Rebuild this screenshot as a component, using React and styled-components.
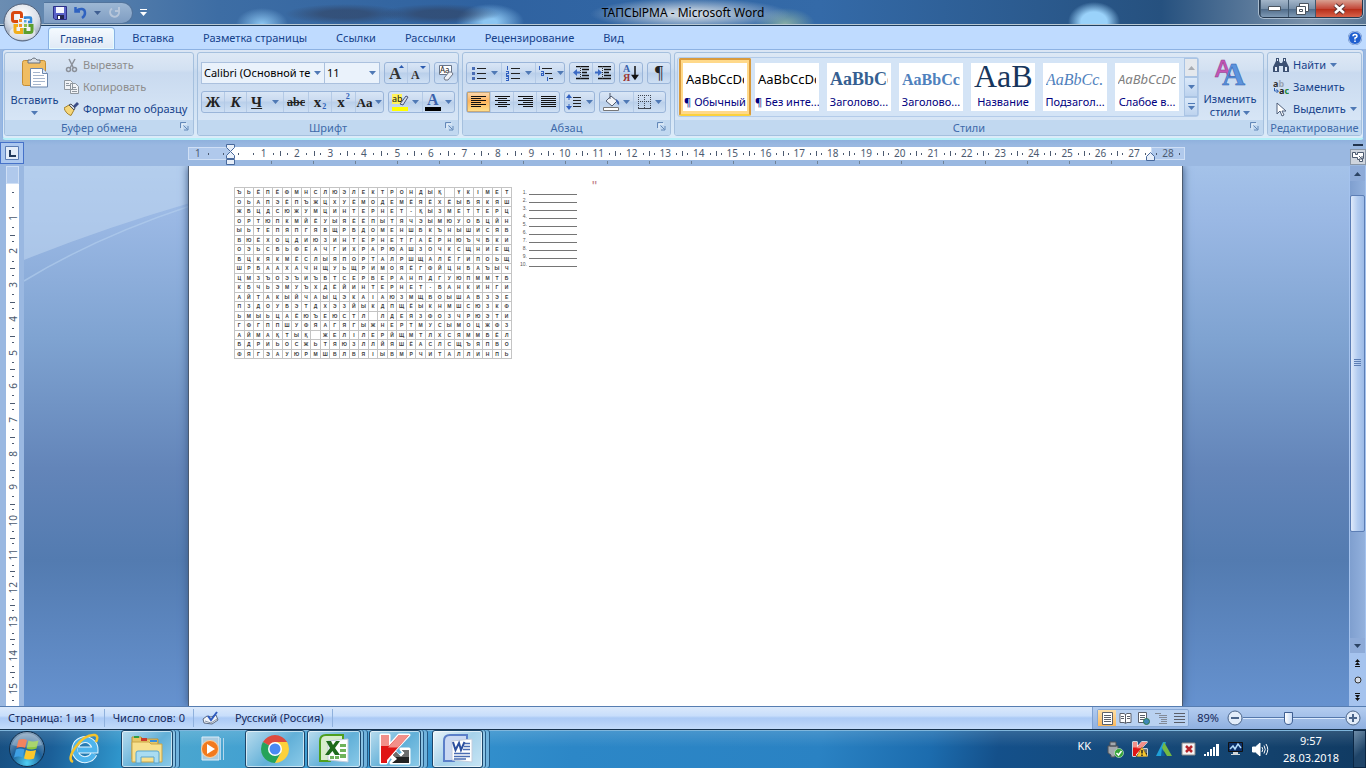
import React from 'react'
import styled, { createGlobalStyle, css } from 'styled-components'

const GlobalStyle = createGlobalStyle`
  * {
    box-sizing: border-box;
  }
  body {
    margin: 0;
    overflow: hidden;
  }
  button, select, input {
    font: inherit;
    color: inherit;
    margin: 0;
    padding: 0;
    border: 0;
    background: none;
  }
  svg {
    display: block;
    flex: none;
  }
`

const Desktop = styled.div`
  display: flex;
  flex-direction: column;
  height: 100vh;
  font-family: 'Noto Sans', 'Open Sans', sans-serif;
  font-size: 11px;
  line-height: 16px;
  color: #15428b;
  background: #9ab8e1;
`

/* title bar */

const TitleBar = styled.header`
  position: relative;
  display: flex;
  align-items: center;
  height: 26px;
  padding-left: 44px;
  border-bottom: 1px solid #1f3f60;
  box-shadow: inset 0 -1px 0 #b9c9d4;
  background:
    radial-gradient(ellipse 60px 10px at 345px 14px, rgba(50, 66, 96, 0.6) 40%, transparent),
    radial-gradient(ellipse 60px 10px at 440px 14px, rgba(50, 66, 96, 0.6) 40%, transparent),
    radial-gradient(ellipse 26px 16px at 262px 24px, #8cc6f2, transparent),
    radial-gradient(ellipse 34px 18px at 490px 22px, #8cc6f2 20%, transparent),
    radial-gradient(ellipse 100px 16px at 690px 14px, #c3d0de 20%, transparent),
    radial-gradient(ellipse 30px 16px at 785px 24px, #86ada6, transparent),
    radial-gradient(ellipse 26px 20px at 1094px 22px, #9ad2fa 50%, transparent),
    linear-gradient(90deg, #6b8db2 0, #3d6da4 16%, #2f62a0 35%, #346aa8 60%, #26517f 85%, #7c93ac 96%, #5b7795 100%);
`

const QuickAccess = styled.div`
  display: flex;
  align-items: center;
  gap: 7px;
  width: 89px;
  height: 22px;
  padding-left: 9px;
  border: 1px solid #52749c;
  border-left: 0;
  border-radius: 0 12px 12px 0;
  background: linear-gradient(#9db7d4, #7f9dc2);
`

const PlainButton = styled.button`
  display: flex;
  align-items: center;
  justify-content: center;
`

const MoreButton = styled(PlainButton)`
  margin-left: 7px;
`

const Title = styled.h1`
  position: absolute;
  left: 0;
  right: 0;
  margin: 0;
  text-align: center;
  font-size: 12px;
  font-weight: 400;
  color: #000;
  pointer-events: none;
`

const WindowButtons = styled.div`
  display: flex;
  align-self: flex-start;
  margin-left: auto;
  margin-right: 3px;
  height: 18px;
  border: 1px solid #25384e;
  border-top: 0;
  border-radius: 0 0 5px 5px;
  overflow: hidden;
  box-shadow: 0 0 0 1px #a9bccf;
`

const WindowButton = styled(PlainButton)`
  width: ${props => props.$width}px;
  border-left: 1px solid #41586f;
  background: ${props => (props.$close
    ? 'linear-gradient(#d9a091, #c4493a 50%, #b52b17 52%, #d8624a)'
    : 'linear-gradient(#a3b6c9, #7890a9 50%, #4e6a88 52%, #7f9ab5)')};
`

const OfficeButton = styled.button`
  position: absolute;
  top: 3px;
  left: 3px;
  z-index: 2;
`

/* ribbon */

const Tabs = styled.nav`
  display: flex;
  align-items: flex-end;
  gap: 5px;
  height: 23px;
  padding-left: 48px;
  background: #bfdbff;
`

const Tab = styled.button`
  height: 22px;
  padding: 0 12px;
  ${props => props.$active && css`
    border: 1px solid #8ab2e4;
    border-bottom: 0;
    border-radius: 4px 4px 0 0;
    box-shadow: inset 0 0 0 1px #e5fbff;
    background: linear-gradient(#f5faff, #dfe9f5);
    padding: 0 11px;
  `}
`

const HelpButton = styled(PlainButton)`
  margin-left: auto;
  margin-right: 4px;
  align-self: center;
`

const Ribbon = styled.section`
  display: flex;
  gap: 3px;
  height: 91px;
  margin: 0 2px;
  padding: 2px 1px;
  border: 1px solid #8db2e3;
  border-bottom: 2px solid #b4f0f8;
  border-radius: 4px;
  background: linear-gradient(#dbe6f4, #cfdff1 20%, #c5d8ee 24%, #dcebf9);
`

const Group = styled.div`
  display: flex;
  flex-direction: column;
  flex: ${props => (props.$width ? `0 0 ${props.$width}px` : '1')};
  min-width: 0;
  border: 1px solid #a5c0de;
  border-radius: 3px;
  background: linear-gradient(#dde8f5, #d3e1f2 20%, #c9daef 24%, #dbe9f8);
`

const GroupBody = styled.div`
  flex: 1;
  display: flex;
  min-height: 0;
  padding: ${props => props.$pad || '0 3px'};
`

const GroupLabel = styled.div`
  position: relative;
  height: 15px;
  line-height: 15px;
  text-align: center;
  color: #3e6aaa;
  background: #c1d8f0;
  border-radius: 0 0 2px 2px;
  white-space: nowrap;
`

const Launcher = styled.button`
  position: absolute;
  right: 4px;
  top: 2px;
`

const BigButton = styled.button`
  display: flex;
  flex-direction: column;
  align-items: center;
  justify-content: flex-start;
  width: ${props => props.$width}px;
  padding-top: 4px;
  line-height: 13px;
  gap: 5px;
`

const Stack = styled.div`
  display: flex;
  flex-direction: column;
  padding-top: 1px;
`

const SmallButton = styled.button`
  display: flex;
  align-items: center;
  gap: 4px;
  height: 22px;
  white-space: nowrap;
  color: ${props => (props.disabled ? '#8d8d8d' : '#15428b')};
`

const Rows = styled.div`
  display: flex;
  flex-direction: column;
  gap: 7px;
  padding-top: 9px;
`

const Row = styled.div`
  display: flex;
  gap: 4px;
`

const ButtonSet = styled.div`
  display: flex;
  height: 22px;
  border: 1px solid #9ab5d9;
  border-radius: 3px;
  background: linear-gradient(#d9e6f6, #c8d9ef 45%, #b9cfea 50%, #cfe0f4);
`

const Tool = styled.button`
  display: flex;
  align-items: center;
  justify-content: center;
  gap: 3px;
  width: ${props => props.$width || 22}px;
  color: #222;
  font-family: 'Liberation Serif', serif;
  font-size: ${props => props.$size || 15}px;
  line-height: 15px;
  & + & {
    border-left: 1px solid #b4cae6;
  }
  ${props => props.$active && css`
    background: linear-gradient(#fbdbb5, #feb35c 45%, #ffe28c);
    box-shadow: inset 0 0 0 1px #c8a878;
  `}
`

const ScriptMark = styled.b`
  align-self: ${props => (props.$low ? 'flex-end' : 'flex-start')};
  margin-left: -2px;
  font-size: 8px;
  line-height: 10px;
  color: #2f62b8;
`

const Combo = styled.label`
  position: relative;
  display: flex;
  align-items: center;
  width: ${props => props.$width}px;
  height: 22px;
  border: 1px solid #abc1de;
  background: #eaf2fb;
  & + & {
    border-left: 0;
  }
  svg {
    position: absolute;
    right: 3px;
  }
`

const Select = styled.select`
  appearance: none;
  width: calc(100% - 13px);
  height: 20px;
  padding-left: 2px;
  overflow: hidden;
  white-space: nowrap;
  text-overflow: clip;
  color: #000;
`

const Combos = styled.div`
  display: flex;
`

const Gallery = styled.div`
  flex: 1;
  display: flex;
  height: 60px;
  margin-top: 4px;
  border: 1px solid #b3cbe9;
  border-radius: 3px;
  background: #d4e4f6;
`

const StyleList = styled.div`
  flex: 1;
  display: flex;
  min-width: 0;
  overflow: hidden;
  padding-left: 1px;
`

const StyleItem = styled.button`
  flex: none;
  width: 72px;
  height: 58px;
  padding: 5px 4px;
  ${props => props.$active && css`
    padding: 3px 2px;
    border: 2px solid #d99a3c;
    border-bottom-color: #fcd13c;
    border-radius: 2px;
    background: #ffd98a;
  `}
`

const StyleCard = styled.span`
  display: flex;
  flex-direction: column;
  height: 48px;
  overflow: hidden;
  background: #fff;
  white-space: nowrap;
  color: #000080;
  text-align: center;
`

const Sample = styled.span`
  display: block;
  height: 31px;
  margin: 0 3px;
  overflow: hidden;
  text-align: left;
  line-height: ${props => props.$lh || 33}px;
  font-family: ${props => props.$font || "'Noto Sans', sans-serif"};
  font-size: ${props => props.$size || 13}px;
  font-weight: ${props => (props.$bold ? 700 : 400)};
  font-style: ${props => (props.$italic ? 'italic' : 'normal')};
  color: ${props => props.$color || '#000'};
`

const GalleryScroll = styled.div`
  display: flex;
  flex-direction: column;
  width: 14px;
`

const GalleryArrow = styled(PlainButton)`
  flex: 1;
  border: 1px solid #aac4e4;
  background: ${props => (props.disabled ? '#e4e8ed' : 'linear-gradient(#dbe9f9, #bdd3ee)')};
`

const InlineArrow = styled.span`
  display: inline-block;
  vertical-align: middle;
`

/* rulers */

const RulerBar = styled.div`
  display: flex;
  height: 26px;
  background: linear-gradient(#8fb1dd, #9ab8e1 20%);
`

const TabSelector = styled.button`
  display: flex;
  align-items: center;
  justify-content: center;
  width: 24px;
  height: 22px;
  margin-top: 2px;
  border: 1px solid #4672c9;
  background: #abc7ef;
`

const RulerTrack = styled.div`
  flex: 1;
  display: flex;
  justify-content: center;
  padding-top: 7px;
`

const HRuler = styled.div`
  width: calc(100% - 328px);
  color: #4c5a70;
  font-size: 10px;
  line-height: 13px;
`

const HZones = styled.div`
  display: flex;
  height: 13px;
`

const Zone = styled.div`
  position: relative;
  display: flex;
  flex: ${props => props.$span} 1 0;
  min-width: 0;
  background: ${props => (props.$margin ? '#b0c9ec' : '#fff')};
  box-shadow: ${props => (props.$margin ? 'inset 0 0 0 1px #cfdff5' : 'none')};
`

const Centimetre = styled.span`
  position: relative;
  flex: ${props => (props.$half ? 1 : 2)} 1 0;
  min-width: 0;
  display: flex;
  align-items: center;
  justify-content: space-evenly;
  & + &::before {
    content: '';
    position: absolute;
    left: 0;
    top: 4px;
    width: 1px;
    height: 5px;
    background: #4c5a70;
  }
`

const Dot = styled.i`
  width: 1px;
  height: 2px;
  background: #4c5a70;
`

const Marker = styled.svg`
  position: absolute;
  z-index: 1;
  ${props => props.$end && css`
    top: 5px;
    right: -5px;
  `}
  ${props => !props.$end && css`
    top: -3px;
    left: -4px;
  `}
`

const TabStops = styled.div`
  height: 3px;
  margin-top: 1px;
  background: repeating-linear-gradient(90deg, transparent 0 41px, #6f8297 41px 42px);
  margin-left: 42px;
  margin-right: 34px;
`

const ScrollHead = styled.div`
  display: flex;
  flex-direction: column;
  align-items: center;
  gap: 3px;
  width: 17px;
  padding-top: 4px;
`

const Splitter = styled.div`
  width: 10px;
  height: 2px;
  background: #22344d;
`

const RulerToggle = styled(PlainButton)`
  width: 16px;
  height: 16px;
  border: 1px solid #8a97a8;
  background: #cfd5de;
`

const Workspace = styled.main`
  flex: 1;
  display: flex;
  min-height: 0;
`

const VRulerColumn = styled.div`
  width: 24px;
  padding: 0 5px 0 6px;
  background: #9ab8e1;
`

const VRuler = styled.div`
  display: flex;
  flex-direction: column;
  height: 100%;
  color: #4c5a70;
  font-size: 10px;
  line-height: 12px;
  background: #fff;
`

const VMargin = styled.div`
  height: 18px;
  flex: none;
  background: #b0c9ec;
  border: 1px solid #cfdff5;
`

const VCentimetre = styled.div`
  position: relative;
  flex: ${props => (props.$half ? 1 : 2)} 1 0;
  min-height: 0;
  display: flex;
  flex-direction: column;
  align-items: center;
  justify-content: space-evenly;
  & + &::before {
    content: '';
    position: absolute;
    left: 4px;
    top: 0;
    width: 5px;
    height: 1px;
    background: #4c5a70;
  }
  i {
    width: 2px;
    height: 1px;
  }
`

const VNumber = styled.span`
  writing-mode: vertical-rl;
  transform: rotate(180deg);
`

/* document */

const Canvas = styled.div`
  position: relative;
  flex: 1;
  display: flex;
  justify-content: center;
  overflow: hidden;
  background: linear-gradient(#a4c2e9, #9ab8e4 10%, #7fa3d1 32%, #6385b9 56%, #537bb0 73%, #6692cf);
`

const Swoosh = styled.svg`
  position: absolute;
  left: 0;
  top: 0;
`

const Page = styled.article`
  position: relative;
  display: flex;
  align-items: flex-start;
  width: calc(100% - 330px);
  margin-right: 2px;
  padding: 13px 45px;
  background: #fff;
  border-left: 1px solid #4c5b70;
  border-right: 1px solid #4c5b70;
  box-shadow: 0 0 8px #3d5a85;
`

const LetterTable = styled.table`
  width: 278px;
  height: 172px;
  margin-top: 8px;
  table-layout: fixed;
  border-collapse: collapse;
  font-family: 'Liberation Sans', Arial, sans-serif;
  font-size: 5px;
  font-weight: 700;
  line-height: 6px;
  color: #3c3c3c;
`

const Letter = styled.td`
  padding: 0;
  border: 1px solid #c4c4c4;
  text-align: center;
  vertical-align: middle;
`

const Answers = styled.ol`
  margin: 9px 0 0 8px;
  padding: 0;
  list-style: none;
  font-family: 'Liberation Sans', Arial, sans-serif;
  font-size: 5px;
  line-height: 8px;
  color: #555;
`

const Answer = styled.li`
  display: flex;
  align-items: flex-start;
  gap: 2px;
  height: 8px;
`

const AnswerNumber = styled.span`
  width: 7px;
  text-align: right;
`

const AnswerLine = styled.span`
  width: 48px;
  height: 7px;
  border-bottom: 1px solid #757575;
`

const Mark = styled.span`
  margin-left: 15px;
  font-family: 'Liberation Sans', Arial, sans-serif;
  font-size: 14px;
  line-height: 14px;
  color: #c08088;
`

const Scrollbar = styled.aside`
  display: flex;
  flex-direction: column;
  align-items: center;
  width: 17px;
  color: #2c4464;
  background: #a5c3ee;
`

const ScrollButton = styled(PlainButton)`
  width: 15px;
  height: 15px;
  background: ${props => (props.$raised ? '#8eabd8' : 'transparent')};
`

const PageButtons = styled.div`
  display: flex;
  flex-direction: column;
  gap: 2px;
  padding-bottom: 2px;
`

const Track = styled.div`
  flex: 1;
  width: 15px;
  padding-top: 14px;
  background: linear-gradient(90deg, #7f9fcf, #93b1dd);
`

const Thumb = styled.div`
  display: flex;
  align-items: center;
  justify-content: center;
  width: 15px;
  height: 76%;
  border: 1px solid #5c7eb5;
  border-radius: 2px;
  background: linear-gradient(90deg, #dfeafa, #b4cdf0 50%, #9dbbe7);
`

/* status bar */

const StatusBar = styled.footer`
  display: flex;
  align-items: center;
  height: 23px;
  border-top: 1px solid #567db1;
  color: #15285a;
  background: linear-gradient(#dbe9fb, #c8defb 40%, #abcaf5 50%, #c3dbfa);
`

const StatusItem = styled.button`
  height: 18px;
  padding: 0 8px;
  line-height: 18px;
  border-right: ${props => (props.$open ? 0 : '1px solid #8fb1dd')};
  white-space: nowrap;
`

const StatusTools = styled.div`
  display: flex;
  align-items: center;
  align-self: stretch;
  margin-left: auto;
  padding: 0 5px 0 4px;
  border-left: 1px solid #7fa0cf;
  background: linear-gradient(#b4cdf0, #8fb0e0);
`

const Views = styled.div`
  display: flex;
  height: 18px;
  border: 1px solid #87a8d5;
  border-radius: 2px;
  background: #b9d1f1;
`

const ViewButton = styled(PlainButton)`
  width: 18px;
  background: ${props => (props.$active ? 'linear-gradient(#fcdfa8, #fdb95d)' : 'transparent')};
`

const ZoomValue = styled.button`
  width: 38px;
  text-align: center;
`

const ZoomRange = styled.input`
  appearance: none;
  width: 102px;
  height: 16px;
  background: linear-gradient(transparent 7px, #5578ab 7px 8px, #dceafd 8px 9px, transparent 9px);
  &::-webkit-slider-thumb {
    appearance: none;
    width: 9px;
    height: 13px;
    border: 1px solid #3f5f92;
    border-radius: 1px 1px 5px 5px;
    background: linear-gradient(90deg, #fff, #c5d9f5);
  }
`

/* taskbar */

const Taskbar = styled.nav`
  display: flex;
  align-items: stretch;
  height: 39px;
  padding-left: 8px;
  border-top: 1px solid #17324d;
  box-shadow: inset 0 1px 0 #7fb6dc;
  background:
    linear-gradient(rgba(255, 255, 255, 0.14), transparent 45%),
    linear-gradient(100deg, #174f81 0, #1b5f98 4%, #2f95cb 9%, #4aa6cf 13%, #3b9bd3 25%, #2c87c7 42%, #2a82c3 60%, #1c6cae 68%, #14508a 73%, #154673 88%, #103a62 100%);
`

const TaskIcon = styled(PlainButton)`
  width: ${props => props.$width}px;
`

const TaskButton = styled(PlainButton)`
  width: ${props => props.$width}px;
  margin-right: ${props => props.$after}px;
  border: 1px solid #1c4569;
  border-radius: 3px;
  box-shadow: inset 0 0 0 1px rgba(255, 255, 255, 0.6)${props => (props.$stacked
    ? ', 2px 0 0 0 #8bc3e4, 3px 0 0 0 #235a87, 6px 0 0 0 #6fb2dc, 7px 0 0 0 #235a87'
    : '')};
  background: ${props => (props.$active
    ? 'linear-gradient(135deg, #eaf5fb, #a7d2ea 50%, #c7e5f5)'
    : 'linear-gradient(135deg, #b9dcee, #62b0d8 55%, #8ccbe9)')};
`

const Tray = styled.div`
  display: flex;
  align-items: center;
  margin-left: auto;
  color: #fff;
`

const TrayIcons = styled.div`
  display: flex;
  align-items: center;
  gap: 8px;
`

const Language = styled.button`
  margin-right: 16px;
  padding-bottom: 6px;
`

const Clock = styled.time`
  width: 84px;
  text-align: center;
  line-height: 17px;
`

const ShowDesktop = styled.button`
  align-self: stretch;
  width: 13px;
  border: 1px solid #0b2745;
  background: linear-gradient(135deg, #6f8da9, #1f4468 60%);
`

const Arrow = ({ color = '#4f79b5', up = false }) => (
  <svg width="7" height="4" viewBox="0 0 7 4" fill={color}>
    <path d={up ? 'M0 4h7L3.500 0z' : 'M0 0h7L3.500 4z'} />
  </svg>
)

const LauncherIcon = () => (
  <svg width="9" height="9" viewBox="0 0 9 9" fill="none" stroke="#6388b8">
    <path d="M.5 6V.5H6M3.500 3.500l4 4M8 4v4H4" />
    <path d="M2 7.500V2h5" stroke="#fff" opacity=".7" />
  </svg>
)

// horizontal bars with a given length for each row
const Lines = ({ rows, x = 0, end = false, center = false, step = 2, width = 15, color = '#111' }) => {
  const start = length => {
    if (end) return width - length
    return center ? (width - length) / 2 : x
  }
  return (
    <svg width={width} height={rows.length * step} shapeRendering="crispEdges">
      {rows.map((length, i) => (
        <rect key={i} x={start(length)} y={i * step} width={length} height="1" fill={color} />
      ))}
    </svg>
  )
}

const OfficeLogo = () => (
  <svg width="39" height="39" viewBox="0 0 39 39">
    <defs>
      <radialGradient id="orb" cx="50%" cy="30%" r="70%">
        <stop offset="0" stopColor="#fff" />
        <stop offset=".6" stopColor="#d9dfe8" />
        <stop offset="1" stopColor="#8f9db2" />
      </radialGradient>
    </defs>
    <circle cx="19.500" cy="19.500" r="18.500" fill="url(#orb)" stroke="#53627a" />
    <ellipse cx="19.500" cy="30" rx="13" ry="7" fill="#fff" opacity=".6" />
    <g fill="none">
      <path d="M15 18.500h-3.500q-2 0-2-2v-5q0-2 2-2h5q2 0 2 2V15" stroke="#d9480f" strokeWidth="3" />
      <path d="M22 16v-1.500h5q1 0 1 1V19h-3" stroke="#2f86d6" strokeWidth="2.500" />
      <path d="M15 22.500h-3v5q0 2 2 2h4.500V25" stroke="#f2ae1a" strokeWidth="3" />
      <path d="M22 25v4.500h5q2 0 2-2v-5h-3.500" stroke="#5c9f2c" strokeWidth="3" />
    </g>
    <path d="M16 16h3v3h-3zM16 21h3v3h-3z" fill="#f2912a" />
    <path d="M21 17h2.500v2.500H21z" fill="#5aa5e4" />
    <path d="M21 21h3v3h-3z" fill="#8cc04c" />
  </svg>
)

const SaveIcon = () => (
  <svg width="14" height="14" viewBox="0 0 14 14">
    <path d="M.5.500h13v13H2L.5 12z" fill="#5a62c8" stroke="#2b2f86" />
    <path d="M3 1h8v6H3z" fill="#f4f6ff" />
    <path d="M4 9h7v4H4z" fill="#23264f" />
    <path d="M5 10h2v3H5z" fill="#fff" />
  </svg>
)

const UndoIcon = () => (
  <svg width="13" height="13" viewBox="0 0 13 13" fill="none" stroke="#2f62c0" strokeWidth="2.500">
    <path d="M2 5c4-3 9-3 9 2q0 3-3 5M1.500 1v4.500H6" />
  </svg>
)

const RepeatIcon = () => (
  <svg width="13" height="13" viewBox="0 0 13 13" fill="none" stroke="#b7c6da" strokeWidth="2">
    <path d="M4 2.500A4.500 4.500 0 1 0 10.500 4M7 5h4V1" />
  </svg>
)

const MoreIcon = ({ color = '#fff' }) => (
  <svg width="7" height="7" viewBox="0 0 7 7" fill={color}>
    <path d="M0 0h7v1H0zM0 3h7L3.500 7z" />
  </svg>
)

const PasteIcon = () => (
  <svg width="28" height="31" viewBox="0 0 28 31">
    <rect x="1.500" y="3.500" width="23" height="25" rx="2" fill="#f0bd62" stroke="#c48d33" />
    <path d="M7 6V3h3q3-4 6 0h3v3z" fill="#d8dce2" stroke="#66707c" />
    <path d="M9.500 11.500h12l5 5V30h-17z" fill="#fff" stroke="#6c87ad" />
    <path d="M21.500 11.500v5h5" fill="#dce7f5" stroke="#6c87ad" />
    <path d="M12 15.500h7M12 18.500h11M12 21.500h12M12 24.500h12M12 27.500h8" stroke="#a5b5cc" />
  </svg>
)

const CutIcon = () => (
  <svg width="15" height="15" viewBox="0 0 15 15" fill="none" stroke="#8b9099" strokeWidth="1.500">
    <path d="M5 1l4.500 9M11 1L6 10" />
    <circle cx="4.500" cy="11.500" r="2" />
    <circle cx="10.500" cy="11.500" r="2" />
  </svg>
)

const CopyIcon = () => (
  <svg width="15" height="14" viewBox="0 0 15 14" fill="#f1f3f6" stroke="#8f979f">
    <path d="M.5.500h6l2 2v7h-8zM6.500 3.500h5l3 3v7h-8z" />
    <path d="M2 3.500h3M2 5.500h4M8 7.500h4M8 9.500h5M8 11.500h5" />
  </svg>
)

const BrushIcon = () => (
  <svg width="15" height="14" viewBox="0 0 15 14">
    <path d="M0 6l5-3 5 5-3 5.500Q2 12 0 6z" fill="#f5d67a" stroke="#a5822c" />
    <path d="M5 3l2-1 4 4-1 2z" fill="#d6d9df" stroke="#4b4f59" />
    <path d="M9 4l4-4 2 2-4 4z" fill="#3b4d86" />
  </svg>
)

const GrowFontIcon = ({ shrink }) => (
  <svg width="17" height="18" viewBox="0 0 17 18">
    <text x="1" y="15" fontFamily="Liberation Serif, serif" fontWeight="700" fontSize={shrink ? 12 : 17} fill="#333">A</text>
    <path d={shrink ? 'M10 2h6l-3 3z' : 'M11 4h5l-2.500-3z'} fill="#2b5bb0" />
  </svg>
)

const ClearIcon = () => (
  <svg width="17" height="18" viewBox="0 0 17 18">
    <path d="M1.500 1.500h12v9h-12z" fill="#fff" stroke="#68758a" />
    <text x="2" y="9" fontFamily="Noto Sans, sans-serif" fontSize="8" fill="#222">Aa</text>
    <path d="M6 14l5-6q3-1 4 2l-5 6q-4 1-4-2z" fill="#eef1f7" stroke="#6c7484" />
  </svg>
)

const HighlightIcon = () => (
  <svg width="17" height="18" viewBox="0 0 17 18">
    <path d="M0 1h10v10H0z" fill="#fff35c" />
    <text x="0" y="9" fontFamily="Noto Sans, sans-serif" fontSize="9" fill="#111">ab</text>
    <path d="M8 11l6-8 2 1-5 8z" fill="#d6dcea" stroke="#49557a" />
    <path d="M0 14h16v4H0z" fill="#ff0" />
  </svg>
)

const FontColorIcon = () => (
  <svg width="17" height="18" viewBox="0 0 17 18">
    <text x="2" y="12" fontFamily="Liberation Serif, serif" fontWeight="700" fontSize="16" fill="#3a62ab">A</text>
    <path d="M0 14h16v4H0z" fill="#000" />
  </svg>
)

const ListIcon = ({ kind }) => (
  <svg width="17" height="16" viewBox="0 0 17 16" shapeRendering="crispEdges">
    {kind === 'multi'
      ? <path d="M5 3.500h10M8 8.500h7M12 13.500h4" stroke="#222" />
      : <path d="M6 3.500h9M6 8.500h9M6 13.500h9" stroke="#222" />}
    {kind === 'bullets' && <path d="M1 2h3v3H1zM1 7h3v3H1zM1 12h3v3H1z" fill="#4a6db5" />}
    {kind === 'numbers' && <path d="M2.500 1v4M1 6.500h2.500v2H1.500v2h2M1 11.500h2.500v4H1M1 13.500h2" fill="none" stroke="#3160c0" />}
    {kind === 'multi' && <path d="M2.500 1v4M4 6.500h2.500v4h-2v-2h2M10.500 12v4" fill="none" stroke="#3160c0" />}
  </svg>
)

const IndentIcon = ({ right }) => (
  <svg width="17" height="14" viewBox="0 0 17 14">
    <path d="M3 .5h13M9 3.500h7M9 6.500h5M9 9.500h7M3 12.500h13" stroke="#111" strokeWidth="1.500" />
    <path d={right ? 'M0 5.500h3V3l4 3.500L3 10V7.500H0z' : 'M7 5.500H4V3L0 6.500 4 10V7.500h3z'} fill="#3b6ac4" />
    <path d="M7.500 0v14" stroke="#333" strokeDasharray="1 1" />
  </svg>
)

const SortIcon = () => (
  <svg width="16" height="18" viewBox="0 0 16 18">
    <text x="0" y="8" fontFamily="Liberation Serif, serif" fontWeight="700" fontSize="10" fill="#3a62ab">А</text>
    <text x="0" y="17" fontFamily="Liberation Serif, serif" fontWeight="700" fontSize="10" fill="#9d3530">Я</text>
    <path d="M12 2v12M9.500 11.500L12 15l2.500-3.500z" stroke="#111" strokeWidth="1.500" />
  </svg>
)

const SpacingIcon = () => (
  <svg width="17" height="16" viewBox="0 0 17 16">
    <path d="M7 3.500h8M7 6.500h8M7 9.500h8M7 12.500h8" stroke="#222" />
    <path d="M3 0l3 4H0zM3 16l3-4H0zM2.500 4h1v2h-1zM2.500 10h1v2h-1z" fill="#3160c0" />
  </svg>
)

const FillIcon = () => (
  <svg width="17" height="18" viewBox="0 0 17 18">
    <path d="M3 8l5-5 6 5-5 5z" fill="#f4f6fa" stroke="#525c70" />
    <path d="M7 0v6" stroke="#525c70" />
    <path d="M13 6q4 2 3 6-2-1-3-4z" fill="#3f66b4" />
    <path d="M.5 14.500h15v3H.5z" fill="#fff" stroke="#777" />
  </svg>
)

const BorderIcon = () => (
  <svg width="14" height="14" viewBox="0 0 14 14" fill="none" stroke="#3f4652">
    <path d="M.5 0v13M6.500 0v13M12.500 0v13M0 .5h13M0 6.500h13" strokeDasharray="1 1" />
    <path d="M0 13.500h13" />
  </svg>
)

const StylesIcon = () => (
  <svg width="32" height="30" viewBox="0 0 32 30">
    <text x="1" y="20" fontFamily="Open Sans, sans-serif" fontWeight="600" fontSize="24" fill="#c455b5" stroke="#8c3c88" strokeWidth=".5">A</text>
    <text x="8" y="28" fontFamily="Liberation Serif, serif" fontWeight="700" fontSize="32" fill="#5c93dd" stroke="#2d60ad" strokeWidth=".5">A</text>
  </svg>
)

const FindIcon = () => (
  <svg width="16" height="14" viewBox="0 0 16 14" fill="#3d5173">
    <path d="M3 0h3v3l1 2h2l1-2V0h3v3l3 6v5h-6V8H6v6H0V9l3-6z" />
    <path d="M2 9h2v4H2zM12 9h2v4h-2zM4 1h1v2H4zM11 1h1v2h-1z" fill="#e6edf8" />
  </svg>
)

const ReplaceIcon = () => (
  <svg width="16" height="16" viewBox="0 0 16 16" fontFamily="Noto Sans, sans-serif" fontWeight="700" fontSize="9">
    <text x="0" y="8" fill="#333">a<tspan fill="#9aa3b0">b</tspan></text>
    <text x="6" y="15" fill="#222">a<tspan fill="#238a3c">c</tspan></text>
    <path d="M1.500 9v3H5M3.500 10.500L5.500 12l-2 2" fill="none" stroke="#2a5db0" />
  </svg>
)

const CursorIcon = () => (
  <svg width="16" height="15" viewBox="0 0 16 15">
    <path d="M4 1v11l3-3 2 5 2-1-2-4h4z" fill="#fff" stroke="#51617c" />
  </svg>
)

const HelpIcon = () => (
  <svg width="14" height="14" viewBox="0 0 14 14">
    <circle cx="7" cy="7" r="6.500" fill="#1f5fd0" stroke="#e8f2ff" />
    <circle cx="7" cy="7" r="6.900" fill="none" stroke="#2d5cae" strokeWidth=".5" />
    <path d="M5 5.200Q5 3.500 7 3.500t2 1.700Q9 6.300 7 7v1.500M7 9.500V11" fill="none" stroke="#fff" strokeWidth="1.500" />
  </svg>
)

const ProofIcon = () => (
  <svg width="17" height="15" viewBox="0 0 17 15">
    <path d="M1 8l4-3 4 1 5-2 2 5-6 4-8-1z" fill="#f2f5fa" stroke="#5c6a80" />
    <path d="M3 10l6 2 6-4" fill="none" stroke="#8794a8" />
    <path d="M6 5l3 4 6-8" fill="none" stroke="#2f5cc0" strokeWidth="2" />
  </svg>
)

const PageViewIcon = ({ kind }) => (
  <svg width="13" height="13" viewBox="0 0 13 13" fill="none" stroke="#5a5f6a">
    {kind === 'print' && <path d="M1.500.500h10v12h-10zM3 3.500h7M3 5.500h7M3 7.500h7M3 9.500h7" fill="#fff" />}
    {kind === 'read' && <path d="M1 1.500h4l1.500 1L8 1.500h4v9H8l-1.500 1-1.500-1H1zM6.500 2v9M2 4.500h3M2 6.500h3M8 4.500h3M8 6.500h3" fill="#fff" />}
    {kind === 'web' && (
      <>
        <path d="M1.500.500h8v10h-8zM3 3.500h5M3 5.500h5M3 7.500h5" fill="#fff" />
        <circle cx="9.500" cy="9.500" r="3" fill="#3f86b8" stroke="#2f7a4b" />
      </>
    )}
    {kind === 'outline' && <path d="M0 1.500h6M4 3.500h8M4 5.500h8M6 7.500h6M6 9.500h6M4 11.500h8" stroke="#828a98" />}
    {kind === 'draft' && <path d="M1 1.500h11M1 4.500h11M1 7.500h11M1 10.500h11" />}
  </svg>
)

const RoundIcon = ({ plus }) => (
  <svg width="16" height="16" viewBox="0 0 16 16" stroke="#4a6489">
    <circle cx="8" cy="8" r="7" fill="#e2ecf9" />
    <path d={plus ? 'M4 8h8M8 4v8' : 'M4 8h8'} strokeWidth="2" />
  </svg>
)

const StartOrb = () => (
  <svg width="38" height="38" viewBox="0 0 38 38">
    <defs>
      <radialGradient id="start" cx="50%" cy="90%" r="90%">
        <stop offset="0" stopColor="#4fd0f5" />
        <stop offset=".5" stopColor="#1d5f98" />
        <stop offset="1" stopColor="#8ea6bd" />
      </radialGradient>
    </defs>
    <circle cx="19" cy="19" r="17.500" fill="url(#start)" stroke="#0f2c49" />
    <path d="M10.500 10q4.500-2 8.500 0l-2 8q-4-2-8.500 0z" fill="#ee5b2a" />
    <path d="M20.500 10.500q4 2 10 0l-2 8q-5 2-10 0z" fill="#8cc63f" />
    <path d="M8 19.500q4.500-2 8.500 0l-2 8q-4-2-8.500 0z" fill="#3fa0e4" />
    <path d="M18 20q4 2 10 0l-2 8.500q-5 2-10 0z" fill="#fcc72c" />
    <path d="M4 15a15.500 15.500 0 0 1 30 0q-15 5-30 0z" fill="#fff" opacity=".25" />
  </svg>
)

const ExplorerLogo = () => (
  <svg width="32" height="32" viewBox="0 0 32 32" fill="none">
    <path d="M26 21A10 10 0 1 1 27 17H10" stroke="#e4f5fe" strokeWidth="7" />
    <path d="M26 21A10 10 0 1 1 27 17H10" stroke="#4fb4ec" strokeWidth="5" />
    <path d="M5 29Q-1 26 8 13.500T27 2q4 1 1 7" stroke="#f5c32c" strokeWidth="2.500" />
  </svg>
)

const FolderLogo = () => (
  <svg width="34" height="30" viewBox="0 0 34 30">
    <path d="M2 3h9l2 2h15v20H2z" fill="#e8c766" stroke="#b8923a" />
    <path d="M4 2h5v2H4z" fill="#2f9e44" />
    <path d="M11 4h6v3h-6z" fill="#c93b2c" />
    <path d="M2 8h17l2 2h11v18H2z" fill="#f8e08e" stroke="#c9a548" />
    <path d="M20 6h7v2h-7z" fill="#3b8fdc" />
    <path d="M6 29V19q0-2 2-2h19q2 0 2 2v10h-5v-6H11v6z" fill="#a9dcf2" stroke="#5aa5cd" />
  </svg>
)

const MediaLogo = () => (
  <svg width="28" height="26" viewBox="0 0 28 26">
    <path d="M3 1h17v23H3z" fill="#a9cbe0" stroke="#dceefa" />
    <path d="M21.500 2v22M24.500 2v22" stroke="#b4d7ec" />
    <circle cx="11" cy="13" r="8.500" fill="#f27a1e" stroke="#fcd2a2" />
    <path d="M8 8l8 5-8 5z" fill="#fff" />
  </svg>
)

const ChromeLogo = () => (
  <svg width="30" height="30" viewBox="0 0 30 30">
    <path d="M15 15L2.900 8A14 14 0 0 1 27.100 8H15z" fill="#dd4b3e" />
    <path d="M15 15L2.900 8A14 14 0 0 0 15 29l6-10.500z" fill="#25a35a" />
    <path d="M15 8h12.100A14 14 0 0 1 15 29l6-10.500z" fill="#fdd13a" />
    <circle cx="15" cy="15" r="7" fill="#fff" />
    <circle cx="15" cy="15" r="5.500" fill="#4a89f3" />
  </svg>
)

const OfficeDoc = ({ color, light, children }) => (
  <svg width="32" height="32" viewBox="0 0 32 32">
    <path d="M2 28V8q0-6 6-6h17v10q0 5-6 6l-7 10z" fill={light} stroke={color} strokeWidth="2" />
    <path d="M10 8l20-2v23l-20-2z" fill="#fff" stroke="#c3cddd" />
    {children}
  </svg>
)

const ExcelLogo = () => (
  <OfficeDoc color="#4f9f1f" light="#d8edcc">
    <path d="M8 8h5l2 4 3-4h4l-5 7 5 7h-5l-2.500-4L11 22H7l5-7z" fill="#1f6b1c" />
    <path d="M22 11h6v3h-6zM22 16h6v3h-6zM12 23h4v3h-4zM17 23h4v3h-4zM22 21h6v4h-6z" fill="#6fb35b" />
  </OfficeDoc>
)

const WordLogo = () => (
  <OfficeDoc color="#5b7fc9" light="#c9d8f2">
    <path d="M11 9l2.500 8L17 10l2 7 3.500-8" fill="none" stroke="#2c4f9e" strokeWidth="2" />
    <path d="M23 10.500h5M22 13.500h6M21 16.500h7M12 20.500h16M12 23.500h16M12 26h12" stroke="#4a6cb3" strokeWidth="1.500" />
  </OfficeDoc>
)

const KasperskyLogo = ({ size = 32, warn }) => (
  <svg width={size} height={size} viewBox="0 0 32 32" strokeLinejoin="round">
    <path d="M2 2h8v11L20 2h10L15 18l5 5 5-3-3-4h8v14H12l3-4-4-3-4 7H2z" fill="#fff" stroke="#fff" strokeWidth="3" />
    <path d="M2 2h8v11L20 2h10L8 27v3H2z" fill="#e01515" />
    <path d="M2 2h8v11h-8zM20 2h10L19 14.500h-10z" fill="#f2908a" />
    <path d="M17 19l5 5 4-4-3-3h7v13H13l5-4-4-4z" fill="#222" />
    <path d="M17 19l5 5 4-4-3-3h7v7H16l-2-2z" fill="#6d6d6d" />
    {warn && <path d="M20 12l11 19H9z" fill="#f8c72e" stroke="#6e5310" />}
    {warn && <path d="M20 18v7M20 27v3" stroke="#222" strokeWidth="3" />}
  </svg>
)

const UsbIcon = () => (
  <svg width="17" height="17" viewBox="0 0 17 17">
    <path d="M3 1h6v4H3zM1 5h10v7l-3 2v2H4v-2l-3-2z" fill="#a4a9ae" stroke="#4e5358" />
    <circle cx="12" cy="12" r="4.500" fill="#35a338" stroke="#d8f2d8" strokeWidth=".6" />
    <path d="M9.500 12l2 2 3-4" fill="none" stroke="#fff" strokeWidth="1.500" />
  </svg>
)

const AutodeskIcon = () => (
  <svg width="17" height="16" viewBox="0 0 17 16">
    <path d="M0 15L7 1h3L6 15z" fill="#1f9fd8" />
    <path d="M8 1l8 14h-5L6 7z" fill="#74b943" />
    <path d="M6 7l3 8H5z" fill="#0d5c9e" />
  </svg>
)

const FlagIcon = () => (
  <svg width="15" height="14" viewBox="0 0 15 14">
    <path d="M1 1h13v12H1z" fill="#f4f4f4" stroke="#8c8c8c" />
    <path d="M5 4l6 6M11 4l-6 6" stroke="#b5252b" strokeWidth="2.500" />
  </svg>
)

const SignalIcon = () => (
  <svg width="16" height="13" viewBox="0 0 16 13" fill="#fff">
    <path d="M0 11h2v2H0zM3 9h2v4H3zM6 6h2v7H6zM9 4h2v9H9zM12 1h3v12h-3z" />
  </svg>
)

const MonitorIcon = () => (
  <svg width="16" height="14" viewBox="0 0 16 14">
    <path d="M.5.500h14v9H.5z" fill="#0b2f68" stroke="#111" />
    <path d="M2 7l3-3 2 3 3-5 3 4" fill="none" stroke="#b4dcfa" strokeWidth="1.500" />
    <path d="M5 10h5v2h2v1H3v-1h2z" fill="#cfd5da" />
  </svg>
)

const SpeakerIcon = () => (
  <svg width="17" height="15" viewBox="0 0 17 15" fill="none" stroke="#fff">
    <path d="M.5 5h3L8 1v13l-4.500-4h-3z" fill="#fff" />
    <path d="M10 5q1.500 2.500 0 5M12 3.500q2.500 4 0 8M14 2q3.500 5.500 0 11" />
  </svg>
)

const MarginMarker = () => (
  <Marker width="10" height="22" viewBox="0 0 10 22" fill="#e8eff9" stroke="#48699c">
    <path d="M.5.500h8v3l-4 4-4-4zM.5 14.500v-3l4-4 4 4v3zM.5 15.500h8v5h-8z" />
  </Marker>
)

const SERIF = "'Liberation Serif', serif"

const STYLES = [
  { name: '¶ Обычный', text: 'AaBbCcDc', active: true },
  { name: '¶ Без инте...', text: 'AaBbCcDc' },
  { name: 'Заголово...', text: 'AaBbCc', size: 18, bold: true, font: SERIF, color: '#365f91' },
  { name: 'Заголово...', text: 'AaBbCc', size: 16, bold: true, font: SERIF, color: '#4f81bd' },
  { name: 'Название', text: 'AaB', size: 32, lh: 26, font: SERIF, color: '#17365d' },
  { name: 'Подзагол...', text: 'AaBbCc.', size: 16, italic: true, font: SERIF, color: '#4f81bd' },
  { name: 'Слабое в...', text: 'AaBbCcDc', italic: true, color: '#808080' },
]

const LETTERS = [
  'ЪЬЁПЁФМНСЛЮЭЛЕКТРОНДЫҚ ҮКІМЕТ',
  'ОЬАПЭЁПЪЖЦХУЁМОДЕМЁЯЁХЁЫБЯКЯШ',
  'ЖБЦДСЮЖУМЦИНТЕРНЕТ-ҚЫЗМЕТТЕРЦ',
  'ОРТЮПКМЙЁУЫЯЁЁПЫТЯЧЭЫМЮУОБЦЙН',
  'ЫЬТЕПЯПГЯБЩРБДОМЕНШБКЪНЫШИСЯВ',
  'ВЮЁХОЦДИЮЗИНТЕРНЕТГАЁРНЮЪЧБКИ',
  'ОЭЬСБЬФЕАЧГИХРАРЮАШЗОЧКСЩНИЕЩ',
  'БЦКЯКМЁСЛЫЯПОРТАЛРШЩАЛЁГИПОЬЩ',
  'ШРБААХАЧНЩУЬЩРИМОЯЁГФЙЦНБАЪЫЧ',
  'ЦМЗЪОЭЪИЪБТСЕРВЕРАНПДГУЮПММТБ',
  'КБЧЬЭМУЪХДЁЙИНТЕРНЕТ-БАНКИНГИ',
  'АЙТАКЫЙЧАЫЦЭКАІАЮЗМЩВОЫШАВЗЭЕ',
  'ПЗДОУБЭТДХЭЗЙЫКДПЩЁЫКНМШСЮЗКФ',
  'ЬМЫЬЦАЁЮЪЕЮСТЛ ЛДЕЯЗФОЗЧРЮЭТИ',
  'ГФГППШУФЯАГЯГЫЖНЕРТМУСЫМОЦЖФЗ',
  'АЙМАҚТЫҚ ЖЕЛІЛЕРЙЩМТЛХСЯММБЁЛ',
  'БДРИЬОСЖЬТЯЮЗЛЛЙЯШЁАСЛСЩЪЯПВО',
  'ФЯГЭАУЮРМШВЛВЯІЫВМРЧИТАЛЛИНПЬ',
]

const range = (from, to) => Array.from({ length: to - from + 1 }, (_, i) => from + i)

const Caption = ({ children, launcher = true }) => (
  <GroupLabel>
    {children}
    {launcher && <Launcher aria-label={children}><LauncherIcon /></Launcher>}
  </GroupLabel>
)

const Clipboard = () => (
  <Group $width={190}>
    <GroupBody $pad="0">
      <BigButton $width={59}>
        <PasteIcon />
        Вставить
        <Arrow />
      </BigButton>
      <Stack>
        <SmallButton disabled><CutIcon />Вырезать</SmallButton>
        <SmallButton disabled><CopyIcon />Копировать</SmallButton>
        <SmallButton><BrushIcon />Формат по образцу</SmallButton>
      </Stack>
    </GroupBody>
    <Caption>Буфер обмена</Caption>
  </Group>
)

const FontGroup = () => (
  <Group $width={262}>
    <GroupBody>
      <Rows>
        <Row>
          <Combos>
            <Combo $width={124}>
              <Select aria-label="Шрифт"><option>Calibri (Основной текст)</option></Select>
              <Arrow />
            </Combo>
            <Combo $width={55}>
              <Select aria-label="Размер шрифта"><option>11</option></Select>
              <Arrow />
            </Combo>
          </Combos>
          <ButtonSet>
            <Tool aria-label="Увеличить размер"><GrowFontIcon /></Tool>
            <Tool aria-label="Уменьшить размер"><GrowFontIcon shrink /></Tool>
          </ButtonSet>
          <ButtonSet><Tool aria-label="Очистить формат"><ClearIcon /></Tool></ButtonSet>
        </Row>
        <Row>
          <ButtonSet>
            <Tool><b>Ж</b></Tool>
            <Tool><b><i>К</i></b></Tool>
            <Tool $width={37}><b><u>Ч</u></b>&nbsp;<Arrow /></Tool>
            <Tool $width={25} $size={12}><b><s>abc</s></b></Tool>
            <Tool $width={23}><b>x</b><ScriptMark $low>2</ScriptMark></Tool>
            <Tool $width={24}><b>x</b><ScriptMark>2</ScriptMark></Tool>
            <Tool $width={28} $size={13}><b>Aa</b><Arrow /></Tool>
          </ButtonSet>
          <ButtonSet>
            <Tool $width={33} aria-label="Цвет выделения"><HighlightIcon /><Arrow /></Tool>
            <Tool $width={32} aria-label="Цвет текста"><FontColorIcon /><Arrow /></Tool>
          </ButtonSet>
        </Row>
      </Rows>
    </GroupBody>
    <Caption>Шрифт</Caption>
  </Group>
)

const ParagraphGroup = () => (
  <Group $width={209}>
    <GroupBody>
      <Rows>
        <Row>
          <ButtonSet>
            <Tool $width={34} aria-label="Маркеры"><ListIcon kind="bullets" /><Arrow /></Tool>
            <Tool $width={34} aria-label="Нумерация"><ListIcon kind="numbers" /><Arrow /></Tool>
            <Tool $width={29} aria-label="Многоуровневый список"><ListIcon kind="multi" /><Arrow /></Tool>
          </ButtonSet>
          <ButtonSet>
            <Tool aria-label="Уменьшить отступ"><IndentIcon /></Tool>
            <Tool aria-label="Увеличить отступ"><IndentIcon right /></Tool>
          </ButtonSet>
          <ButtonSet><Tool aria-label="Сортировка"><SortIcon /></Tool></ButtonSet>
          <ButtonSet><Tool $size={18}>¶</Tool></ButtonSet>
        </Row>
        <Row>
          <ButtonSet>
            <Tool $width={23} $active aria-label="По левому краю"><Lines rows={[15, 10, 15, 10, 15, 10]} /></Tool>
            <Tool $width={23} aria-label="По центру"><Lines rows={[15, 9, 15, 9, 15, 9]} center /></Tool>
            <Tool $width={23} aria-label="По правому краю"><Lines rows={[15, 10, 15, 10, 15, 10]} end /></Tool>
            <Tool $width={23} aria-label="По ширине"><Lines rows={[15, 15, 15, 15, 15, 15]} /></Tool>
          </ButtonSet>
          <ButtonSet><Tool $width={29} aria-label="Интервал"><SpacingIcon /><Arrow /></Tool></ButtonSet>
          <ButtonSet>
            <Tool $width={33} aria-label="Заливка"><FillIcon /><Arrow /></Tool>
            <Tool $width={32} aria-label="Границы"><BorderIcon /><Arrow /></Tool>
          </ButtonSet>
        </Row>
      </Rows>
    </GroupBody>
    <Caption>Абзац</Caption>
  </Group>
)

const StylesGroup = () => (
  <Group>
    <GroupBody $pad="0 2px">
      <Gallery>
        <StyleList>
          {STYLES.map((style, i) => (
            <StyleItem key={i} $active={style.active}>
              <StyleCard>
                <Sample
                  $size={style.size}
                  $lh={style.lh}
                  $font={style.font}
                  $bold={style.bold}
                  $italic={style.italic}
                  $color={style.color}
                >
                  {style.text}
                </Sample>
                {style.name}
              </StyleCard>
            </StyleItem>
          ))}
        </StyleList>
        <GalleryScroll>
          <GalleryArrow disabled aria-label="Вверх"><Arrow up color="#a7abb1" /></GalleryArrow>
          <GalleryArrow aria-label="Вниз"><Arrow /></GalleryArrow>
          <GalleryArrow aria-label="Дополнительно"><MoreIcon color="#4f79b5" /></GalleryArrow>
        </GalleryScroll>
      </Gallery>
      <BigButton $width={62}>
        <StylesIcon />
        <span>Изменить<br />стили <InlineArrow><Arrow /></InlineArrow></span>
      </BigButton>
    </GroupBody>
    <Caption>Стили</Caption>
  </Group>
)

const EditGroup = () => (
  <Group $width={95}>
    <GroupBody $pad="0 5px">
      <Stack>
        <SmallButton><FindIcon />Найти <Arrow /></SmallButton>
        <SmallButton><ReplaceIcon />Заменить</SmallButton>
        <SmallButton><CursorIcon />Выделить <Arrow /></SmallButton>
      </Stack>
    </GroupBody>
    <Caption launcher={false}>Редактирование</Caption>
  </Group>
)

const Rulers = () => (
  <RulerBar>
    <TabSelector aria-label="Табуляция">
      <svg width="14" height="14" viewBox="0 0 14 14">
        <path d="M.5.500h13v13H.5z" fill="#e4edf9" stroke="#5b7db5" />
        <path d="M5 4v6h6" fill="none" stroke="#223a5c" strokeWidth="2" />
      </svg>
    </TabSelector>
    <RulerTrack>
      <HRuler>
        <HZones>
          <Zone $span={42} $margin>
            <Centimetre>1<Dot /></Centimetre>
            <Centimetre $half><Dot /></Centimetre>
          </Zone>
          <Zone $span={921}>
            <MarginMarker />
            <Centimetre $half><Dot /></Centimetre>
            {range(1, 27).map(n => (
              <Centimetre key={n}><Dot />{n}<Dot /></Centimetre>
            ))}
            <Marker $end width="10" height="9" viewBox="0 0 10 9" fill="#e8eff9" stroke="#48699c">
              <path d="M.5 8.500v-4l4-4 4 4v4z" />
            </Marker>
          </Zone>
          <Zone $span={34} $margin>
            <Centimetre><Dot />28<Dot /></Centimetre>
          </Zone>
        </HZones>
        <TabStops />
      </HRuler>
    </RulerTrack>
    <ScrollHead>
      <Splitter />
      <RulerToggle aria-label="Линейка">
        <svg width="12" height="12" viewBox="0 0 12 12" fill="#fff" stroke="#4c5a70">
          <path d="M.5 1.500h3v2h2v-2h6v6h-1v3h-3v-2h-2v-2h-5z" />
          <path d="M7 5l3 3M10 5v3H7" />
        </svg>
      </RulerToggle>
    </ScrollHead>
  </RulerBar>
)

const Document = () => (
  <Canvas>
    <Swoosh width="166" height="130" viewBox="0 0 166 130">
      <path d="M0 0h166v37Q80 62 0 94z" fill="#c3daf2" opacity=".5" />
      <path d="M0 115Q70 72 166 40" fill="none" stroke="#b5d0ef" strokeWidth="1.500" opacity=".6" />
    </Swoosh>
    <Page>
      <LetterTable>
        <tbody>
          {LETTERS.map((line, row) => (
            <tr key={row}>
              {line.split('').map((letter, col) => <Letter key={col}>{letter}</Letter>)}
            </tr>
          ))}
        </tbody>
      </LetterTable>
      <Answers>
        {range(1, 10).map(n => (
          <Answer key={n}>
            <AnswerNumber>{n}.</AnswerNumber>
            <AnswerLine />
          </Answer>
        ))}
      </Answers>
      <Mark>"</Mark>
    </Page>
  </Canvas>
)

const App = () => (
  <Desktop>
    <GlobalStyle />
    <TitleBar>
      <OfficeButton aria-label="Office"><OfficeLogo /></OfficeButton>
      <QuickAccess>
        <PlainButton aria-label="Сохранить"><SaveIcon /></PlainButton>
        <PlainButton aria-label="Отменить"><UndoIcon /></PlainButton>
        <Arrow color="#3f5f92" />
        <PlainButton aria-label="Повторить"><RepeatIcon /></PlainButton>
      </QuickAccess>
      <MoreButton aria-label="Настройка панели"><MoreIcon /></MoreButton>
      <Title>ТАПСЫРМА - Microsoft Word</Title>
      <WindowButtons>
        <WindowButton $width={28} aria-label="Свернуть">
          <svg width="13" height="5"><path d="M.5.500h12v4H.5z" fill="#fff" stroke="#4a545f" /></svg>
        </WindowButton>
        <WindowButton $width={27} aria-label="Восстановить">
          <svg width="13" height="12" viewBox="0 0 13 12" fill="#fff" stroke="#4a545f">
            <path d="M3.500.500h9v8h-9z" />
            <path d="M.5 3.500h9v8h-9zM3.500 6.500h3v2h-3z" />
          </svg>
        </WindowButton>
        <WindowButton $width={47} $close aria-label="Закрыть">
          <svg width="13" height="12" viewBox="0 0 13 12">
            <path d="M2 2l9 8M11 2l-9 8" stroke="#5b3434" strokeWidth="4.500" />
            <path d="M2 2l9 8M11 2l-9 8" stroke="#fff" strokeWidth="2.500" />
          </svg>
        </WindowButton>
      </WindowButtons>
    </TitleBar>
    <Tabs>
      <Tab $active>Главная</Tab>
      <Tab>Вставка</Tab>
      <Tab>Разметка страницы</Tab>
      <Tab>Ссылки</Tab>
      <Tab>Рассылки</Tab>
      <Tab>Рецензирование</Tab>
      <Tab>Вид</Tab>
      <HelpButton aria-label="Справка"><HelpIcon /></HelpButton>
    </Tabs>
    <Ribbon>
      <Clipboard />
      <FontGroup />
      <ParagraphGroup />
      <StylesGroup />
      <EditGroup />
    </Ribbon>
    <Rulers />
    <Workspace>
      <VRulerColumn>
        <VRuler>
          <VMargin />
          <VCentimetre $half><Dot /></VCentimetre>
          {range(1, 15).map(n => (
            <VCentimetre key={n}><Dot /><VNumber>{n}</VNumber><Dot /></VCentimetre>
          ))}
        </VRuler>
      </VRulerColumn>
      <Document />
      <Scrollbar>
        <ScrollButton $raised aria-label="Вверх"><Arrow up color="#2c4464" /></ScrollButton>
        <Track>
          <Thumb><Lines rows={[7, 7, 7, 7]} width={7} color="#5c7eb5" /></Thumb>
        </Track>
        <PageButtons>
          <ScrollButton $raised aria-label="Вниз"><Arrow color="#2c4464" /></ScrollButton>
          <ScrollButton aria-label="Предыдущая страница">
            <svg width="7" height="8" viewBox="0 0 7 8"><path d="M3.500 0L6 3H1zM3.500 3L6 6H1zM1 7h5v1H1z" fill="#111" /></svg>
          </ScrollButton>
          <ScrollButton aria-label="Выбор объекта">
            <svg width="8" height="8"><circle cx="4" cy="4" r="3" fill="#d5dce8" stroke="#333" /></svg>
          </ScrollButton>
          <ScrollButton aria-label="Следующая страница">
            <svg width="7" height="8" viewBox="0 0 7 8"><path d="M3.500 8L6 5H1zM3.500 5L6 2H1zM1 0h5v1H1z" fill="#111" /></svg>
          </ScrollButton>
        </PageButtons>
      </Scrollbar>
    </Workspace>
    <StatusBar>
      <StatusItem>Страница: 1 из 1</StatusItem>
      <StatusItem>Число слов: 0</StatusItem>
      <StatusItem $open aria-label="Правописание"><ProofIcon /></StatusItem>
      <StatusItem>Русский (Россия)</StatusItem>
      <StatusTools>
        <Views>
          <ViewButton $active aria-label="Разметка страницы"><PageViewIcon kind="print" /></ViewButton>
          <ViewButton aria-label="Режим чтения"><PageViewIcon kind="read" /></ViewButton>
          <ViewButton aria-label="Веб-документ"><PageViewIcon kind="web" /></ViewButton>
          <ViewButton aria-label="Структура"><PageViewIcon kind="outline" /></ViewButton>
          <ViewButton aria-label="Черновик"><PageViewIcon kind="draft" /></ViewButton>
        </Views>
        <ZoomValue>89%</ZoomValue>
        <PlainButton aria-label="Уменьшить"><RoundIcon /></PlainButton>
        <ZoomRange type="range" min="10" max="190" defaultValue="89" aria-label="Масштаб" />
        <PlainButton aria-label="Увеличить"><RoundIcon plus /></PlainButton>
      </StatusTools>
    </StatusBar>
    <Taskbar>
      <TaskIcon $width={38} aria-label="Пуск"><StartOrb /></TaskIcon>
      <TaskIcon $width={75} aria-label="Internet Explorer"><ExplorerLogo /></TaskIcon>
      <TaskButton $width={52} $after={7} $stacked aria-label="Проводник"><FolderLogo /></TaskButton>
      <TaskIcon $width={65} aria-label="Windows Media"><MediaLogo /></TaskIcon>
      <TaskButton $width={60} $after={2} aria-label="Chrome"><ChromeLogo /></TaskButton>
      <TaskButton $width={54} $after={8} $stacked aria-label="Excel"><ExcelLogo /></TaskButton>
      <TaskButton $width={52} $after={11} $stacked aria-label="Kaspersky"><KasperskyLogo /></TaskButton>
      <TaskButton $width={51} $after={8} $stacked $active aria-label="Word"><WordLogo /></TaskButton>
      <Tray>
        <Language>KK</Language>
        <TrayIcons>
          <UsbIcon />
          <KasperskyLogo size={16} warn />
          <AutodeskIcon />
          <FlagIcon />
          <SignalIcon />
          <MonitorIcon />
          <SpeakerIcon />
        </TrayIcons>
        <Clock>9:57<br />28.03.2018</Clock>
        <ShowDesktop aria-label="Свернуть все окна" />
      </Tray>
    </Taskbar>
  </Desktop>
)

export default App
